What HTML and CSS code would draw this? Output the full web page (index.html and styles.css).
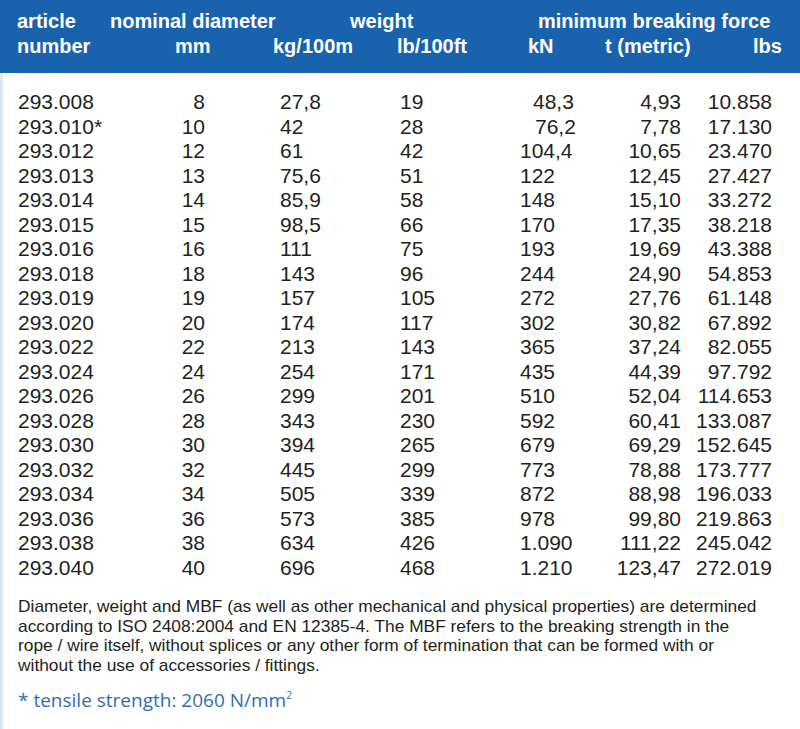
FILE: index.html
```html
<!DOCTYPE html>
<html>
<head>
<meta charset="utf-8">
<link rel="stylesheet" href="styles.css">
</head>
<body>
<div class="page">
  <header class="head">
    <div class="hrow">
      <div class="h h-art">article</div>
      <div class="h h-nom">nominal diameter</div>
      <div class="h h-wgt">weight</div>
      <div class="h h-mbf">minimum breaking force</div>
    </div>
    <div class="hrow">
      <div class="h h-num">number</div>
      <div class="h h-mm">mm</div>
      <div class="h h-kg">kg/100m</div>
      <div class="h h-lb">lb/100ft</div>
      <div class="h h-kn">kN</div>
      <div class="h h-t">t (metric)</div>
      <div class="h h-lbs">lbs</div>
    </div>
  </header>
  <main class="content">
    <div class="grid">
      <div>293.008</div><div class="r">8</div><div class="kg">27,8</div><div>19</div><div class="kn kn-a">48,3</div><div class="r">4,93</div><div class="r">10.858</div>
      <div>293.010*</div><div class="r">10</div><div class="kg">42</div><div>28</div><div class="kn kn-b">76,2</div><div class="r">7,78</div><div class="r">17.130</div>
      <div>293.012</div><div class="r">12</div><div class="kg">61</div><div>42</div><div class="kn">104,4</div><div class="r">10,65</div><div class="r">23.470</div>
      <div>293.013</div><div class="r">13</div><div class="kg">75,6</div><div>51</div><div class="kn">122</div><div class="r">12,45</div><div class="r">27.427</div>
      <div>293.014</div><div class="r">14</div><div class="kg">85,9</div><div>58</div><div class="kn">148</div><div class="r">15,10</div><div class="r">33.272</div>
      <div>293.015</div><div class="r">15</div><div class="kg">98,5</div><div>66</div><div class="kn">170</div><div class="r">17,35</div><div class="r">38.218</div>
      <div>293.016</div><div class="r">16</div><div class="kg">111</div><div>75</div><div class="kn">193</div><div class="r">19,69</div><div class="r">43.388</div>
      <div>293.018</div><div class="r">18</div><div class="kg">143</div><div>96</div><div class="kn">244</div><div class="r">24,90</div><div class="r">54.853</div>
      <div>293.019</div><div class="r">19</div><div class="kg">157</div><div>105</div><div class="kn">272</div><div class="r">27,76</div><div class="r">61.148</div>
      <div>293.020</div><div class="r">20</div><div class="kg">174</div><div>117</div><div class="kn">302</div><div class="r">30,82</div><div class="r">67.892</div>
      <div>293.022</div><div class="r">22</div><div class="kg">213</div><div>143</div><div class="kn">365</div><div class="r">37,24</div><div class="r">82.055</div>
      <div>293.024</div><div class="r">24</div><div class="kg">254</div><div>171</div><div class="kn">435</div><div class="r">44,39</div><div class="r">97.792</div>
      <div>293.026</div><div class="r">26</div><div class="kg">299</div><div>201</div><div class="kn">510</div><div class="r">52,04</div><div class="r">114.653</div>
      <div>293.028</div><div class="r">28</div><div class="kg">343</div><div>230</div><div class="kn">592</div><div class="r">60,41</div><div class="r">133.087</div>
      <div>293.030</div><div class="r">30</div><div class="kg">394</div><div>265</div><div class="kn">679</div><div class="r">69,29</div><div class="r">152.645</div>
      <div>293.032</div><div class="r">32</div><div class="kg">445</div><div>299</div><div class="kn">773</div><div class="r">78,88</div><div class="r">173.777</div>
      <div>293.034</div><div class="r">34</div><div class="kg">505</div><div>339</div><div class="kn">872</div><div class="r">88,98</div><div class="r">196.033</div>
      <div>293.036</div><div class="r">36</div><div class="kg">573</div><div>385</div><div class="kn">978</div><div class="r">99,80</div><div class="r">219.863</div>
      <div>293.038</div><div class="r">38</div><div class="kg">634</div><div>426</div><div class="kn">1.090</div><div class="r">111,22</div><div class="r">245.042</div>
      <div>293.040</div><div class="r">40</div><div class="kg">696</div><div>468</div><div class="kn">1.210</div><div class="r">123,47</div><div class="r">272.019</div>
    </div>
    <p class="note">Diameter, weight and MBF (as well as other mechanical and physical properties) are determined<br>according to ISO 2408:2004 and EN 12385-4. The MBF refers to the breaking strength in the<br>rope / wire itself, without splices or any other form of termination that can be formed with or<br>without the use of accessories / fittings.</p>
    <p class="tensile">* tensile strength: 2060 N/mm<sup>2</sup></p>
  </main>
</div>
</body>
</html>
```
FILE: styles.css
```css
html, body {
  margin: 0;
  padding: 0;
  background: #ffffff;
}
.page {
  width: 800px;
  height: 729px;
  font-family: "Liberation Sans", Arial, sans-serif;
  color: #231f20;
  overflow: hidden;
}
.head {
  background: #1862ae;
  color: #ffffff;
  height: 73px;
  box-sizing: border-box;
  padding: 9px 0 0 17px;
}
.hrow {
  display: flex;
  height: 25px;
  align-items: center;
}
.h {
  font-weight: bold;
  font-size: 20px;
  white-space: nowrap;
}
.h-art { width: 93px; }
.h-nom { width: 240px; }
.h-wgt { width: 188px; }
.h-num { width: 158px; }
.h-mm { width: 98px; }
.h-kg { width: 124px; }
.h-lb { width: 131px; }
.h-kn { width: 77px; }
.h-t { width: 148px; }
.content {
  border-left: 3px solid #dce7f2;
  height: 656px;
  box-sizing: border-box;
  padding: 17px 0 0 15px;
}
.grid {
  display: grid;
  grid-template-columns: 112px 75px 195px 120px 80px 81px 91px;
  grid-auto-rows: 24.5px;
  align-items: center;
  font-size: 21px;
  white-space: nowrap;
}
.r { text-align: right; }
.kg { padding-left: 75px; }
.kn-a { padding-left: 13px; }
.kn-b { padding-left: 15px; }
.note {
  margin: 17px 0 0 0;
  font-size: 17.35px;
  line-height: 19.5px;
  width: 775px;
  white-space: nowrap;
}
.tensile {
  margin: 12px 0 0 0;
  font-family: "Open Sans", "Noto Sans", sans-serif;
  font-size: 19px;
  color: #2f6db5;
}
.tensile sup {
  font-size: 10px;
  vertical-align: 8px;
  line-height: 0;
}
```
